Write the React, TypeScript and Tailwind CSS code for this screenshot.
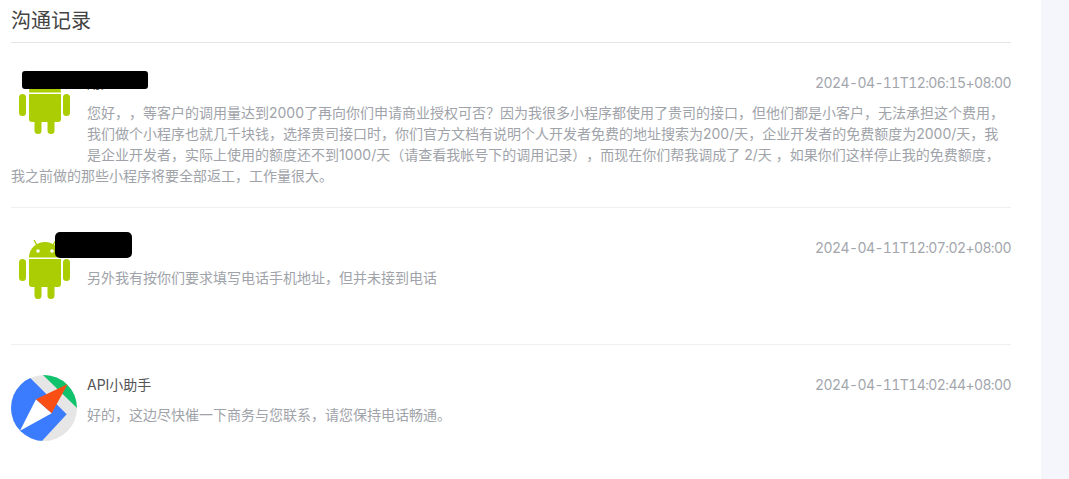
const font = "font-['Inter','Noto_Sans_CJK_SC',sans-serif]";

function AndroidAvatar() {
    return (
        <svg width="66" height="66" viewBox="0 0 66 66" className="float-left mr-[10px] mb-[10px]">
            <g fill="#abcd03">
                <path d="M18 19.5a16 15.5 0 0 1 32 0z" />
                <path d="M18 21h32v25a3 3 0 0 1-3 3H21a3 3 0 0 1-3-3z" />
                <rect x="8" y="21" width="7" height="22" rx="3.5" />
                <rect x="52" y="21" width="7" height="22" rx="3.5" />
                <rect x="23.5" y="44" width="7" height="17" rx="3.5" />
                <rect x="36.5" y="44" width="7" height="17" rx="3.5" />
            </g>
            <path d="M23 2l4 7M45 2l-4 7" stroke="#abcd03" strokeWidth="1.4" />
            <circle cx="27" cy="13" r="1.8" fill="#fff" />
            <circle cx="41" cy="13" r="1.8" fill="#fff" />
        </svg>
    );
}

function CompassAvatar() {
    return (
        <svg width="66" height="66" viewBox="0 0 66 66" className="float-left mr-[10px] mb-[10px]">
            <defs>
                <clipPath id="logo">
                    <circle cx="33" cy="33" r="33" />
                </clipPath>
            </defs>
            <g clipPath="url(#logo)">
                <rect width="66" height="66" fill="#e6e6e6" />
                <path d="M32 0L66 33V0z" fill="#0fc26b" />
                <path d="M19 2.7L55.7 39.3 30 67H-2V2.7z" fill="#3b7cff" />
                <path d="M25 24.3L40.7 38.3 9 55.7z" fill="#fff" />
                <path d="M25 24.3L56.7 9 40.7 38.3z" fill="#fa4f14" />
            </g>
        </svg>
    );
}

const records = [
    {
        avatar: <AndroidAvatar />,
        name: '用户',
        time: '2024-04-11T12:06:15+08:00',
        text: '您好，，等客户的调用量达到2000了再向你们申请商业授权可否？因为我很多小程序都使用了贵司的接口，但他们都是小客户，无法承担这个费用，我们做个小程序也就几千块钱，选择贵司接口时，你们官方文档有说明个人开发者免费的地址搜索为200/天，企业开发者的免费额度为2000/天，我是企业开发者，实际上使用的额度还不到1000/天（请查看我帐号下的调用记录），而现在你们帮我调成了 2/天 ，如果你们这样停止我的免费额度，我之前做的那些小程序将要全部返工，工作量很大。',
    },
    {
        avatar: <AndroidAvatar />,
        name: '',
        time: '2024-04-11T12:07:02+08:00',
        text: '另外我有按你们要求填写电话手机地址，但并未接到电话',
    },
    {
        avatar: <CompassAvatar />,
        name: 'API小助手',
        time: '2024-04-11T14:02:44+08:00',
        text: '好的，这边尽快催一下商务与您联系，请您保持电话畅通。',
    },
];

export default function App() {
    return (
        <div className={`flex h-screen overflow-hidden bg-white [text-spacing-trim:space-all] ${font}`}>
            <main className="w-[1041px] pl-[11px] pr-[30px]">
                <h1 className="h-[43px] border-b border-[#e5e5e5] text-[20px] leading-[42px] text-[#444]">沟通记录</h1>

                {records.map((rec, idx) => (
                    <div key={idx} className="relative min-h-[137px] flow-root border-b border-[#f0f0f0] pt-[30px] pb-5 last:border-b-0">
                        {rec.avatar}
                        <div className="flex h-[21px] -translate-y-px items-center justify-between">
                            <span className="text-[14px] leading-[21px] text-[#555]">{rec.name}</span>
                            <span className="text-[14px] leading-[19px] tracking-[-0.6px] text-[#a3a6ad] [font-variant-numeric:tabular-nums]">{rec.time}</span>
                        </div>
                        <p className="mt-[9px] -translate-y-px text-[14px] leading-[21px] text-[#a0a3a9]">{rec.text}</p>

                        {/* redaction marks over the user names */}
                        {idx === 0 && <div className="absolute left-[11px] top-[28px] h-[18px] w-[126px] rounded-[3px] bg-black" />}
                        {idx === 1 && <div className="absolute left-[44px] top-[24px] h-[26px] w-[77px] rounded-[5px] bg-black" />}
                    </div>
                ))}
            </main>
            <aside className="flex-1 bg-[#f4f6fb]" />
        </div>
    );
}
